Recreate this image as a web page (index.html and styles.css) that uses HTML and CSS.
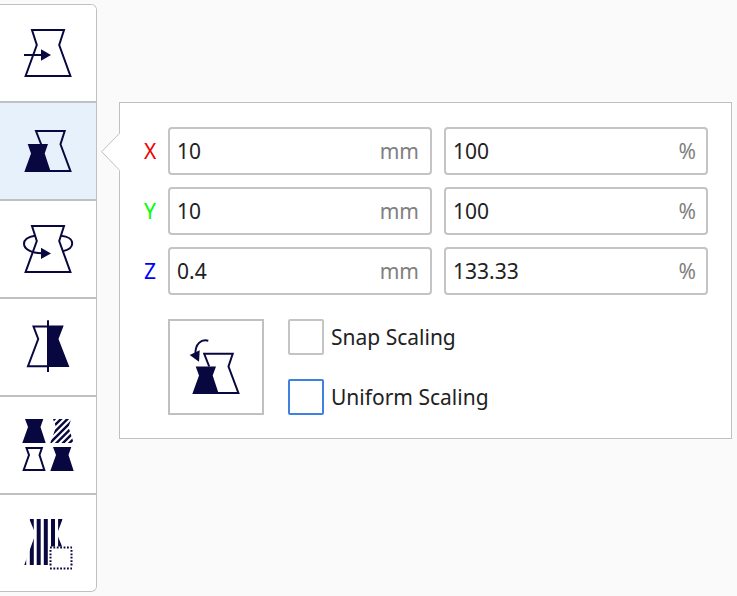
FILE: index.html
```html
<!DOCTYPE html>
<html lang="en">
<head>
<meta charset="utf-8">
<title>Scale tool</title>
<link rel="stylesheet" href="styles.css">
</head>
<body>
<main class="workspace">
  <nav class="toolbar">
    <button class="tool" aria-label="Move">
      <svg class="icon" viewBox="0 0 96 96">
        <path class="line" d="M32 25H64L59.2 40L70.4 71H25.6L36.8 40Z M24 50H42"/>
        <path class="solid" d="M41 44.3L51 50L41 55.7Z"/>
      </svg>
    </button>
    <button class="tool active" aria-label="Scale">
      <svg class="icon" viewBox="0 0 96 96">
        <path class="line" d="M41.2 41.5L36 28H64.7L60.5 41.3L70.4 68H48"/>
        <path class="solid" d="M27.7 41H48L44.7 50.5L50.8 69H24.3L31 50.5Z"/>
      </svg>
    </button>
    <button class="tool" aria-label="Rotate">
      <svg class="icon" viewBox="0 0 96 96">
        <path class="line" d="M32 25H64L59.2 40L70.4 71H25.6L36.8 40Z"/>
        <path class="line" d="M35 34.8C28 36 24 39 24 42.8C24 48 31 52 42 52.3M61 34.8C68 35.4 72.2 38.5 72.2 42.5C72.2 46 68.5 49 62.5 50.3"/>
        <path class="solid" d="M41 46.7L51 52.4L41 58Z"/>
      </svg>
    </button>
    <button class="tool" aria-label="Mirror">
      <svg class="icon" viewBox="0 0 96 96">
        <path class="line" d="M48 27.5H33.5L38.2 40L28 67.2H48"/>
        <path class="solid" d="M48 26.5H63.7L58.5 40L69.4 68H48Z M47 21.3H49V73H47Z"/>
      </svg>
    </button>
    <button class="tool" aria-label="Per model settings">
      <svg class="icon" viewBox="0 0 96 96">
        <clipPath id="hatched"><path d="M53 22H71.3L68.5 30L73.7 46H50.3L56 30Z"/></clipPath>
        <path class="solid" d="M25 22H43.3L40.5 30L45.7 46H22.3L28 30Z M53 50H71.3L68.5 58L73.7 74H50.3L56 58Z"/>
        <path class="line" d="M26.5 51H41.9L39.5 58L44.3 73H23.7L29 58Z"/>
        <path class="line hatch" clip-path="url(#hatched)" d="M48 28.5L58 18.5M48 35L65 18M48 41.5L71 18.5M48 48L76 20M52 50.5L77 25.5M58 51L78 31M64 51.5L78 37.5M70 52L80 42"/>
      </svg>
    </button>
    <button class="tool" aria-label="Support blocker">
      <svg class="icon" viewBox="0 0 96 96">
        <clipPath id="striped"><path d="M29.3 24H62.6L57 39L69.5 70H24.3L35.5 39Z"/></clipPath>
        <path class="solid" clip-path="url(#striped)" d="M24 24h2.2v46h-2.2z M29.8 24h4v46h-4z M36.7 24h4v46h-4z M43.8 24h4v46h-4z M51 24h4v46h-4z M58.1 24h4.6v46h-4.6z"/>
        <path class="blank" d="M49 51.5H73V75H49Z"/>
        <path class="dots" d="M50 52.5H72M71.5 55V72M50 73.5H72M50.5 55V72"/>
      </svg>
    </button>
  </nav>

  <section class="panel">
    <svg class="pointer" viewBox="0 0 20 40"><path d="M20 .5L18.5 1.5L.7 20L18.5 38.5L20 39.5Z"/><path class="edge" d="M18.5 1.3L.7 19.7L18.5 38.1"/></svg>
    <div class="row">
      <span class="axis x">X</span>
      <div class="field length"><span>10</span><span class="unit">mm</span></div>
      <div class="field"><span>100</span><span class="unit">%</span></div>
    </div>
    <div class="row">
      <span class="axis y">Y</span>
      <div class="field length"><span>10</span><span class="unit">mm</span></div>
      <div class="field"><span>100</span><span class="unit">%</span></div>
    </div>
    <div class="row">
      <span class="axis z">Z</span>
      <div class="field length"><span>0.4</span><span class="unit">mm</span></div>
      <div class="field"><span>133.33</span><span class="unit">%</span></div>
    </div>
    <div class="options">
      <button class="reset" aria-label="Reset">
        <svg class="icon" viewBox="0 0 92 92">
          <path class="line" d="M39.2 45.5L34.2 32.8H62.7L58.5 45.5L68.4 72H46"/>
          <path class="solid" d="M25.7 45.4H46L42.7 54.5L48.8 73H22.3L29 54.5Z"/>
          <path class="line" d="M38.3 19.7C31 17.8 25.2 23 25.4 33"/>
          <path class="solid" d="M19.7 34L29.7 29.2L29 40.8Z"/>
        </svg>
      </button>
      <div class="checks">
        <label class="check"><span class="box"></span>Snap Scaling</label>
        <label class="check"><span class="box focused"></span>Uniform Scaling</label>
      </div>
    </div>
  </section>
</main>
</body>
</html>
```
FILE: styles.css
```css
* {
  box-sizing: border-box;
}

body {
  margin: 0;
  background: #fafafa;
  color: #222;
  font: 21px/28px "Noto Sans", sans-serif;
}

button {
  padding: 0;
  background: #fff;
}

.workspace {
  display: flex;
  align-items: flex-start;
  gap: 22px;
  height: 596px;
  padding-top: 4px;
}

.toolbar {
  display: flex;
  flex-direction: column;
  width: 97px;
  border: 1px solid #c0c0c0;
  border-left: 0;
  border-radius: 0 6px 6px 0;
  overflow: hidden;
}

.tool {
  display: block;
  width: 96px;
  height: 98px;
  border: 0;
  border-bottom: 2px solid #c0c0c0;
}

.tool:last-child {
  height: 96px;
  border-bottom: 0;
}

.tool.active {
  background: #e6f1fc;
}

.icon {
  display: block;
  width: 100%;
  height: 100%;
}

.line {
  fill: none;
  stroke: #08073f;
  stroke-width: 2;
}

.line.hatch {
  stroke-width: 2.4;
}

.solid {
  fill: #08073f;
}

.blank {
  fill: #fff;
}

.dots {
  fill: none;
  stroke: #08073f;
  stroke-width: 2;
  stroke-dasharray: 1.8 1.6;
}

.panel {
  position: relative;
  width: 613px;
  height: 337px;
  margin-top: 98px;
  padding: 24px 23px;
  border: 1px solid #c0c0c0;
  background: #fff;
}

.pointer {
  position: absolute;
  top: 29px;
  left: -19px;
  width: 20px;
  height: 40px;
  fill: #fff;
}

.pointer .edge {
  fill: none;
  stroke: #c0c0c0;
}

.row {
  display: grid;
  grid-template-columns: 13px 264px 264px;
  column-gap: 12px;
  align-items: center;
  height: 48px;
  margin-bottom: 12px;
}

.axis {
  padding-left: 1px;
  text-align: center;
}

.x {
  color: #f00000;
}

.y {
  color: #0f0;
}

.z {
  color: #00f;
}

.field {
  display: flex;
  align-items: center;
  justify-content: space-between;
  height: 48px;
  padding: 0 10px 0 7px;
  border: 2px solid #c4c4c4;
  border-radius: 4px;
}

.field.length {
  padding-right: 11px;
}

.unit {
  color: #808080;
}

.options {
  display: flex;
  gap: 24px;
  margin: 24px 0 0 25px;
}

.reset {
  width: 96px;
  height: 96px;
  border: 2px solid #c0c0c0;
}

.checks {
  display: flex;
  flex-direction: column;
  gap: 24px;
}

.check {
  display: flex;
  align-items: center;
  gap: 7px;
  height: 36px;
}

.box {
  width: 36px;
  height: 36px;
  border: 2px solid #c4c4c4;
  border-radius: 2px;
}

.box.focused {
  border-color: #3f80e0;
}
```
